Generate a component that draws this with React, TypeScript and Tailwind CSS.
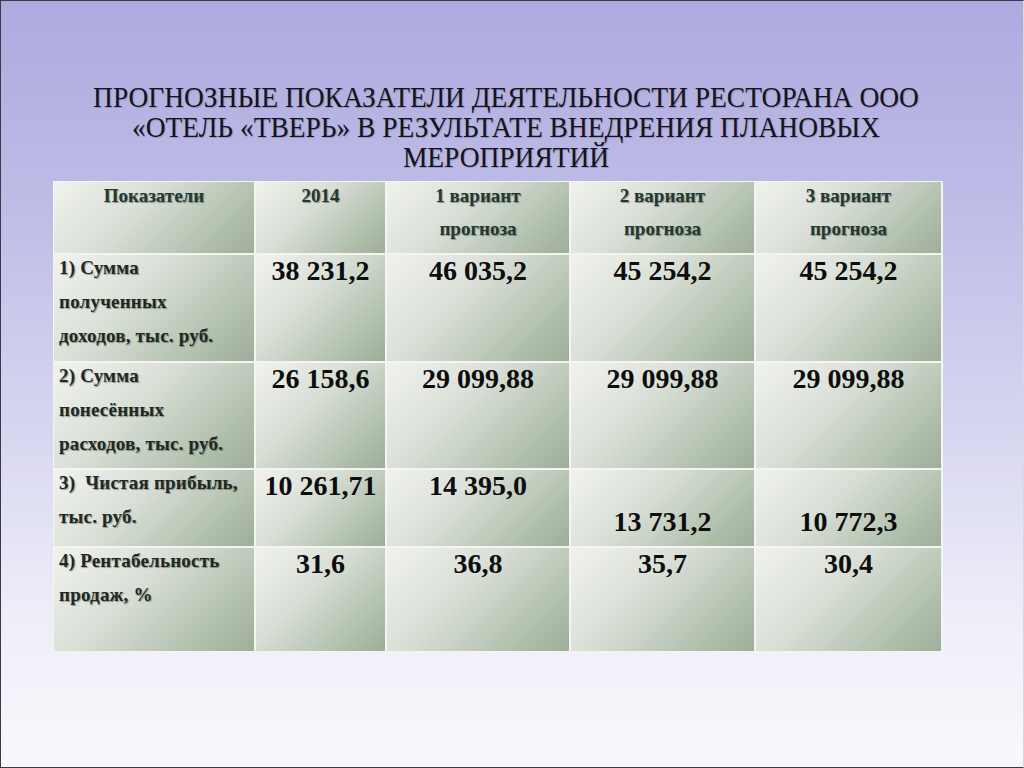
const serif = { fontFamily: '"Liberation Serif", "Times New Roman", serif' };

const cellBg =
  'bg-[linear-gradient(135deg,#f1f2ef_0%,#d9dfd6_40%,#b0bfac_80%,#9dae99_100%)]';
const shadowText = '[text-shadow:1px_1px_1px_rgba(0,0,0,0.35)]';

type Row = {
  label: string[];
  values: { text: string; low?: boolean }[];
  h: string;
};

const rows: Row[] = [
  {
    label: ['1) Сумма', 'полученных', 'доходов, тыс. руб.'],
    values: [{ text: '38 231,2' }, { text: '46 035,2' }, { text: '45 254,2' }, { text: '45 254,2' }],
    h: 'h-[106px]',
  },
  {
    label: ['2) Сумма', 'понесённых', 'расходов, тыс. руб.'],
    values: [{ text: '26 158,6' }, { text: '29 099,88' }, { text: '29 099,88' }, { text: '29 099,88' }],
    h: 'h-[105px]',
  },
  {
    label: ['3)  Чистая прибыль,', 'тыс. руб.'],
    values: [
      { text: '10 261,71' },
      { text: '14 395,0' },
      { text: '13 731,2', low: true },
      { text: '10 772,3', low: true },
    ],
    h: 'h-[76px]',
  },
  {
    label: ['4) Рентабельность', 'продаж, %'],
    values: [{ text: '31,6' }, { text: '36,8' }, { text: '35,7' }, { text: '30,4' }],
    h: 'h-[103px]',
  },
];

const headers = [['Показатели'], ['2014'], ['1 вариант', 'прогноза'], ['2 вариант', 'прогноза'], ['3 вариант', 'прогноза']];

export default function App() {
  return (
    <div
      className="w-[1024px] h-[768px] overflow-hidden border-y border-l border-r border-[#3a3a4a] border-r-[#d8d8e0] bg-[linear-gradient(180deg,#aeaadf_0%,#bdbbe6_25%,#d6d5f0_55%,#eeeef9_80%,#f8f8fc_100%)]"
      style={serif}
    >
      <div className="pt-[81px] h-[180px]">
        <h1
          className="text-center text-[30px] leading-[30px] text-[#14141e] scale-x-[0.915] [text-shadow:1px_1px_1px_rgba(0,0,0,0.2)] whitespace-nowrap ml-[-12px]"
          style={serif}
        >
          ПРОГНОЗНЫЕ ПОКАЗАТЕЛИ ДЕЯТЕЛЬНОСТИ РЕСТОРАНА ООО
          <br />
          «ОТЕЛЬ «ТВЕРЬ» В РЕЗУЛЬТАТЕ ВНЕДРЕНИЯ ПЛАНОВЫХ
          <br />
          МЕРОПРИЯТИЙ
        </h1>
      </div>

      <div className="ml-[52px] w-[890px] bg-[#f4f5f2] p-px grid grid-cols-[200px_129px_182px_183px_185px] gap-[2px]">
        {headers.map((lines, i) => (
          <div key={i} className={`${cellBg} h-[71px] text-center overflow-hidden`}>
            <div className="-mt-[3px]">
              {lines.map((l, j) => (
                <div key={j} className={`text-[19px] leading-[33px] font-bold text-[#1f3a35] ${shadowText}`}>
                  {l}
                </div>
              ))}
            </div>
          </div>
        ))}

        {rows.map((r, ri) => (
          <>
            <div key={`l${ri}`} className={`${cellBg} ${r.h} pl-[5px] overflow-hidden`}>
              <div className="-mt-[4px]">
                {r.label.map((l, j) => (
                  <div
                    key={j}
                    className={`text-[19px] leading-[34px] font-bold tracking-[0.2px] text-[#1c2a26] whitespace-pre ${shadowText}`}
                  >
                    {l}
                  </div>
                ))}
              </div>
            </div>
            {r.values.map((v, vi) => (
              <div
                key={`v${ri}-${vi}`}
                className={`${cellBg} ${r.h} text-center ${v.low ? 'pt-[37px]' : 'pt-[1px]'}`}
              >
                <span className="text-[28px] leading-[30px] font-bold text-[#0d0d0d]">{v.text}</span>
              </div>
            ))}
          </>
        ))}
      </div>
    </div>
  );
}
